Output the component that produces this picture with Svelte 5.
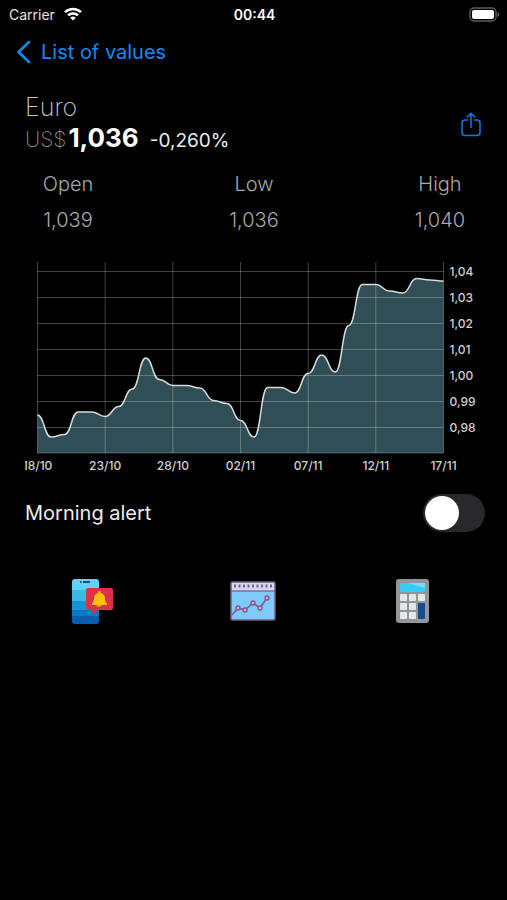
<script lang="ts">
	const rates = [
		0.9848, 0.9763, 0.9773, 0.986, 0.986, 0.9842, 0.9881, 0.9948, 1.0067, 0.9985, 0.9962,
		0.9962, 0.9952, 0.9904, 0.9892, 0.9827, 0.9763, 0.9954, 0.9954, 0.9933, 1.0008, 1.0079,
		1.0013, 1.0192, 1.035, 1.035, 1.0325, 1.0317, 1.0373, 1.0367, 1.0363
	];
	const dates = ['18/10', '23/10', '28/10', '02/11', '07/11', '12/11', '17/11'];
	const levels = [1.04, 1.03, 1.02, 1.01, 1.0, 0.99, 0.98];

	const stats = [
		{ label: 'Open', value: '1,039' },
		{ label: 'Low', value: '1,036' },
		{ label: 'High', value: '1,040' }
	];

	// plot area inside the svg
	const left = 12.5;
	const right = 418.5;
	const bottom = 193;

	const x = (day: number) => left + (day * (right - left)) / (rates.length - 1);
	const y = (rate: number) => 11.5 + (1.04 - rate) * 2600;
	const format = (rate: number) => rate.toFixed(2).replace('.', ',');

	// horizontal bezier: every point has a flat tangent
	const line = rates
		.map((rate, i) => {
			if (i === 0) return `M${x(0)} ${y(rate)}`;
			const mid = (x(i - 1) + x(i)) / 2;
			return `C${mid} ${y(rates[i - 1])} ${mid} ${y(rate)} ${x(i)} ${y(rate)}`;
		})
		.join('');
	const area = `${line}V${bottom}H${left}Z`;

	let morningAlert = $state(false);
</script>

<div class="status">
	<div class="carrier">
		<span>Carrier</span>
		<svg width="20" height="14" viewBox="0 0 18 14" fill="none" stroke="#fff" stroke-width="2.5">
			<path d="M1 5.2a11.4 11.4 0 0 1 16 0" />
			<path d="M4 8.4a7.2 7.2 0 0 1 10 0" />
			<path d="M9 13.6 6.2 10.8a4 4 0 0 1 5.6 0z" fill="#fff" stroke="none" />
		</svg>
	</div>
	<time>00:44</time>
	<svg class="battery" width="31" height="15" viewBox="0 0 31 15">
		<rect x="1" y="1" width="26" height="13" rx="4" fill="none" stroke="#5c5c5e" stroke-width="1.4" />
		<rect x="3" y="3" width="22" height="9" rx="2" fill="#fff" />
		<path d="M28.4 5v5q2-.8 2-2.5t-2-2.5z" fill="#5c5c5e" />
	</svg>
</div>

<nav>
	<a href="#values">
		<svg width="16" height="24" viewBox="0 0 16 24" fill="none" stroke="currentColor" stroke-width="2.6" stroke-linecap="round" stroke-linejoin="round">
			<path d="M13 2 2.5 12 13 22" />
		</svg>
		List of values
	</a>
</nav>

<main>
	<header>
		<div>
			<h1>Euro</h1>
			<p class="price">
				<span class="currency">US$</span>
				<strong>1,036</strong>
				<span class="change">-0,260%</span>
			</p>
		</div>
		<button class="share" aria-label="Share">
			<svg width="20" height="25" viewBox="0 0 20 25" fill="none" stroke="currentColor" stroke-width="1.5" stroke-linecap="round" stroke-linejoin="round">
				<path d="M6.5 8H4Q1 8 1 11v9.500q0 3 3 3h12q3 0 3-3V11q0-3-3-3h-2.500" />
				<path d="M10 15.500V1.500M6.200 5 10 1.300 13.800 5" />
			</svg>
		</button>
	</header>

	<dl class="stats">
		{#each stats as stat}
			<div>
				<dt>{stat.label}</dt>
				<dd>{stat.value}</dd>
			</div>
		{/each}
	</dl>

	<svg class="chart" viewBox="0 0 460 216" role="img" aria-label="Euro rate">
		<path d={area} fill="#304e56" />
		<g class="grid">
			{#each levels as level}
				<line x1={left} x2={right} y1={y(level)} y2={y(level)} />
			{/each}
			{#each dates as _, i}
				<line x1={x(i * 5)} x2={x(i * 5)} y1="2" y2={bottom} />
			{/each}
			<line x1={left} x2={right} y1={bottom} y2={bottom} />
		</g>
		<path d={line} fill="none" stroke="#d5dadb" stroke-width="1.5" />
		{#each levels as level}
			<text x={right + 6} y={y(level) + 4}>{format(level)}</text>
		{/each}
		{#each dates as date, i}
			<text x={x(i * 5)} y="210" text-anchor="middle">{date}</text>
		{/each}
	</svg>

	<label class="alert">
		Morning alert
		<input type="checkbox" role="switch" bind:checked={morningAlert} />
	</label>

	<div class="actions">
		<button aria-label="Price alerts">
			<svg width="48" height="48" viewBox="0 0 48 48">
				<defs>
					<clipPath id="phone"><rect x="4" y="2" width="27" height="45" rx="3" /></clipPath>
				</defs>
				<g clip-path="url(#phone)">
					<path fill="#5bd5f3" d="M4 2h27v11H4z" />
					<path fill="#3db9e8" d="M4 13h27v11H4z" />
					<path fill="#1d91d5" d="M4 24h27v9H4z" />
					<path fill="#0878c9" d="M4 33h27v6H4z" />
					<path fill="#075eaf" d="M4 39h27v8H4z" />
				</g>
				<path d="M12 5h1.500M15 5h7" stroke="#174c7c" stroke-width="1.8" />
				<path fill="#df3049" d="M20 11h23q2 0 2 2v18q0 2-2 2H30l-5 5-1-5h-4q-2 0-2-2V13q0-2 2-2z" />
				<path fill="#ffc20a" d="M31 14q2 0 2 2 4 1 4 6 0 3 2 4v2H24v-2q2-1 2-4 0-5 4-6 0-2 1-2z" />
				<path fill="#f49a05" d="M28 28h6q-1 2-3 2t-3-2z" />
			</svg>
		</button>
		<button aria-label="Charts">
			<svg width="48" height="48" viewBox="0 0 48 48">
				<rect x="3" y="5" width="44" height="38" rx="1.5" fill="#80cafb" />
				<path fill="#d9d6ed" d="M3 5h44v9H3z" />
				<path d="M6 9h38" stroke="#73658f" stroke-width="3" stroke-dasharray="2 2.5" />
				<path d="M3 14h44" stroke="#826d9c" stroke-width="1.5" />
				<rect x="3" y="5" width="44" height="38" rx="1.5" fill="none" stroke="#775b8a" stroke-width="1.5" />
				<path d="m4 38 6-7 7 2 8-7 7 5 7-10" fill="none" stroke="#775b8a" stroke-width="1.5" />
				<g fill="#eda3bb" stroke="#775b8a" stroke-width="1.3">
					<circle cx="10" cy="31" r="2" />
					<circle cx="17" cy="33" r="2" />
					<circle cx="25" cy="26" r="2" />
					<circle cx="32" cy="31" r="2" />
					<circle cx="39" cy="21" r="2" />
				</g>
			</svg>
		</button>
		<button aria-label="Calculator">
			<svg width="48" height="48" viewBox="0 0 48 48">
				<rect x="8" y="2" width="33" height="44" rx="3" fill="#929698" />
				<path fill="#35cdf5" d="M12 6h25v9H12z" />
				<path fill="#6be1ff" d="M20 6h17v5z" />
				<g fill="#e5e8e9">
					<rect x="12" y="17" width="7" height="7" rx="1" />
					<rect x="21" y="17" width="7" height="7" rx="1" />
					<rect x="30" y="17" width="7" height="7" rx="1" />
					<rect x="12" y="26" width="7" height="7" rx="1" />
					<rect x="21" y="26" width="7" height="7" rx="1" />
					<rect x="12" y="35" width="7" height="7" rx="1" />
					<rect x="21" y="35" width="7" height="7" rx="1" />
				</g>
				<rect x="30" y="26" width="7" height="16" rx="1" fill="#124c91" />
			</svg>
		</button>
	</div>
</main>

<style>
	:global(body) {
		background: #000;
		color: #fff;
		font-family: Inter, 'Liberation Sans', sans-serif;
	}

	h1,
	p,
	dl,
	dd {
		margin: 0;
	}

	svg {
		display: block;
	}

	button {
		padding: 0;
		border: 0;
		background: none;
		cursor: pointer;
	}

	.status {
		display: grid;
		grid-template-columns: 1fr auto 1fr;
		align-items: center;
		height: 28px;
		padding: 0 7px 0 9px;
		font-size: 13px;
	}

	.carrier {
		display: flex;
		align-items: center;
		gap: 8px;
		color: #e4e4e4;
		font-size: 14px;
	}

	.status time {
		font-size: 14px;
		font-weight: 600;
	}

	.battery {
		justify-self: end;
	}

	nav {
		padding: 12px 16px;
	}

	nav a {
		display: inline-flex;
		align-items: center;
		gap: 9px;
		color: #1588f5;
		font-size: 20px;
		line-height: 24px;
		text-decoration: none;
	}

	main {
		padding: 12px 22px 0 25px;
	}

	header {
		display: flex;
		align-items: center;
		justify-content: space-between;
	}

	h1 {
		color: #c4c4c4;
		font-size: 25px;
		font-weight: 200;
		line-height: 30px;
	}

	.price {
		display: flex;
		align-items: baseline;
		line-height: 32px;
	}

	.currency {
		margin-right: 2px;
		color: #8a8a8a;
		font-size: 21px;
		font-weight: 200;
	}

	strong {
		margin-right: 11px;
		font-size: 26px;
		font-weight: 700;
	}

	.change {
		color: #ececec;
		font-size: 19px;
	}

	.share {
		margin-right: 4px;
		color: #0f7be8;
	}

	.stats {
		display: flex;
		justify-content: space-between;
		padding: 15px 20px 0 18px;
		color: #a8a8a8;
		font-size: 20px;
		font-weight: 300;
		line-height: 24px;
	}

	.stats div {
		display: flex;
		flex-direction: column;
		align-items: center;
		gap: 12px;
		width: 50px;
	}

	.chart {
		width: 100%;
		margin-top: 28px;
	}

	.grid line {
		stroke: #fff;
		stroke-opacity: 0.26;
	}

	.chart text {
		fill: #d0d0d0;
		font-size: 12px;
		font-weight: 500;
	}

	.alert {
		display: flex;
		align-items: center;
		justify-content: space-between;
		margin-top: 18px;
		color: #ececec;
		font-size: 20px;
	}

	.alert input {
		appearance: none;
		width: 62px;
		height: 38px;
		margin: 0;
		padding: 2px;
		border-radius: 19px;
		background: #29292b;
	}

	.alert input::before {
		content: '';
		display: block;
		width: 34px;
		height: 34px;
		border-radius: 50%;
		background: #fff;
		transition: transform 0.2s;
	}

	.alert input:checked {
		background: #30d158;
	}

	.alert input:checked::before {
		transform: translateX(24px);
	}

	.actions {
		display: flex;
		justify-content: space-between;
		padding: 45px 49px 0 43px;
	}
</style>
